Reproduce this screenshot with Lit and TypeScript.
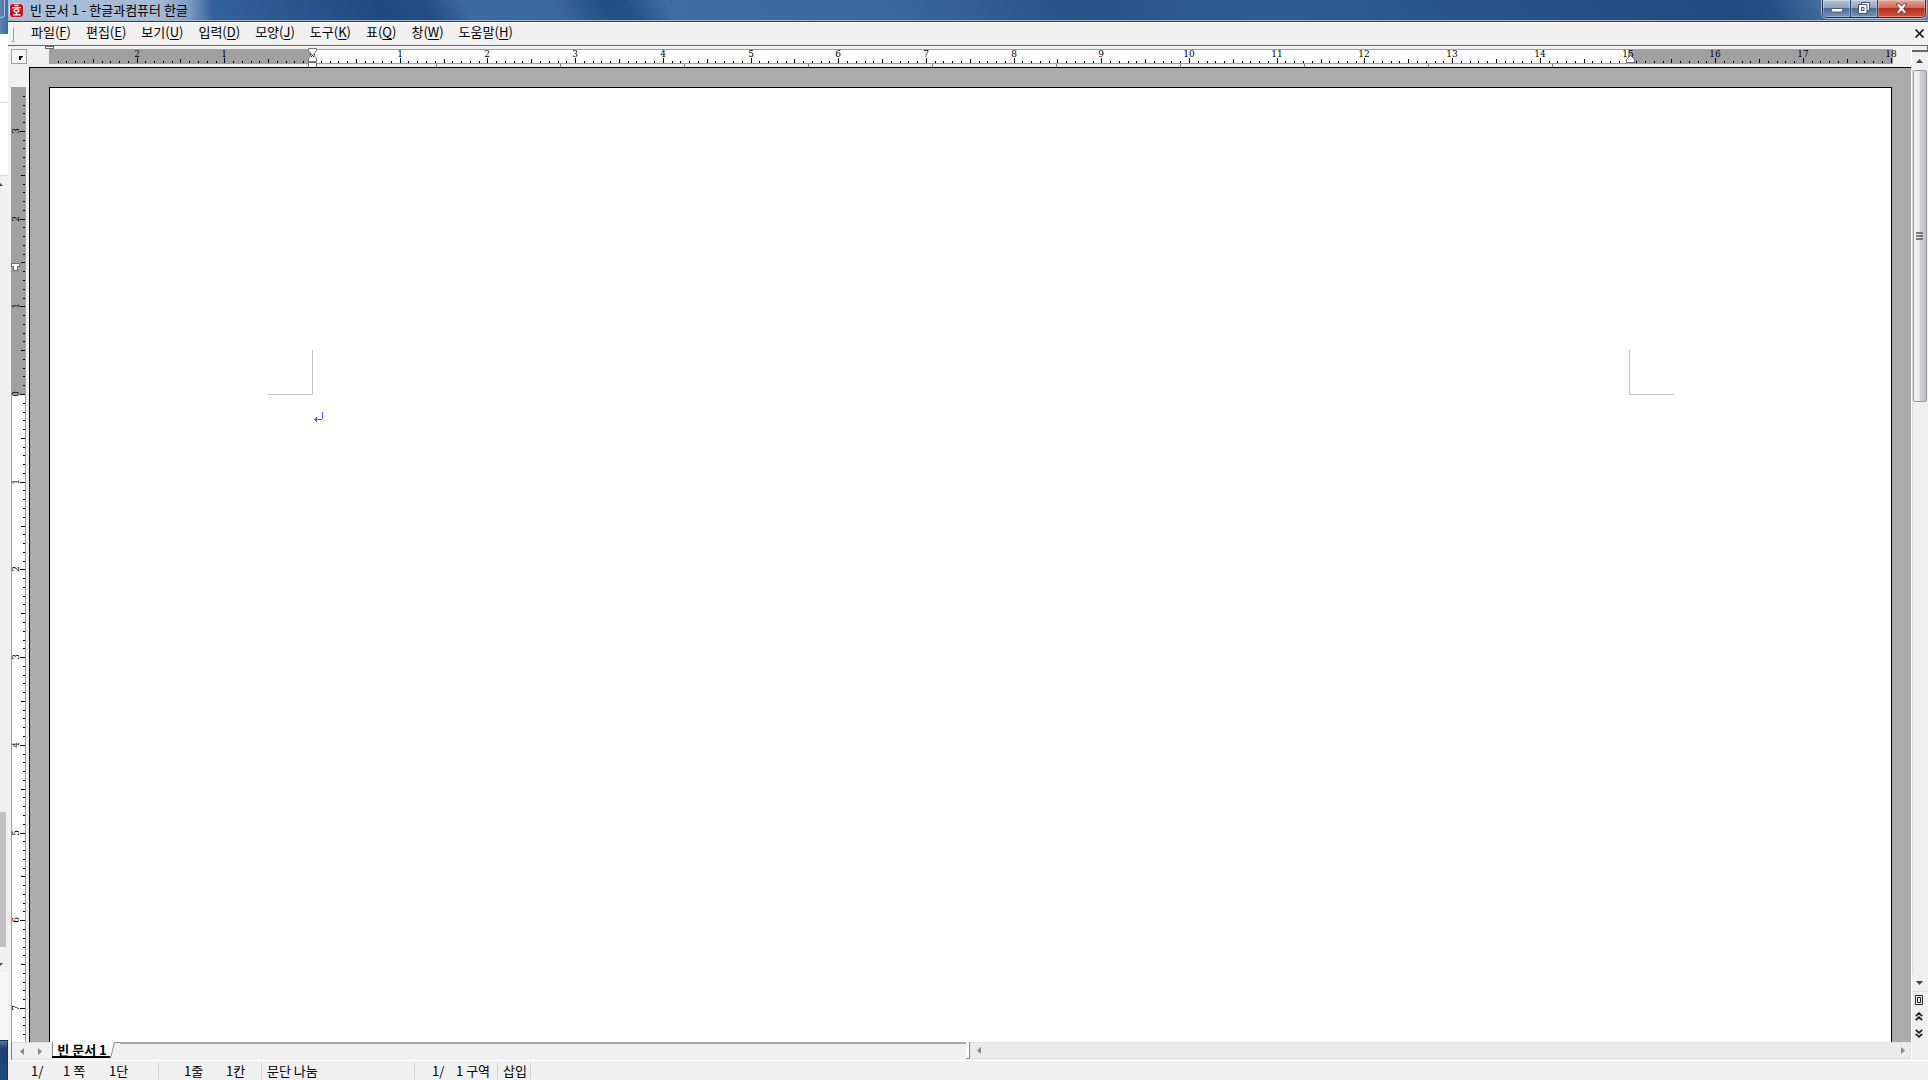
import { LitElement, html, svg, css } from "lit";
import { customElement, state } from "lit/decorators.js";

const UNIT = 87.7;

const range = (from: number, to: number) =>
  Array.from({ length: Math.max(0, to - from + 1) }, (_, i) => from + i);

const MENUS: [string, string][] = [
  ["파일", "F"],
  ["편집", "E"],
  ["보기", "U"],
  ["입력", "D"],
  ["모양", "J"],
  ["도구", "K"],
  ["표", "Q"],
  ["창", "W"],
  ["도움말", "H"],
];

const tickLength = (i: number) => (i % 10 === 0 ? 5 : i % 5 === 0 ? 4 : 2);

@customElement("h-ruler")
export class HRuler extends LitElement {
  static styles = css`
    :host {
      display: block;
      height: 21px;
      overflow: hidden;
    }
    svg {
      display: block;
      width: 100%;
      height: 21px;
    }
    text {
      font: 9px "DejaVu Serif", serif;
      text-anchor: middle;
      fill: #000;
    }
  `;

  render() {
    const zero = 283;
    const end = Math.round(zero + 15 * UNIT);
    const at = (i: number) => Math.round(zero + (i * UNIT) / 10);
    return html`<svg shape-rendering="crispEdges" aria-hidden="true">
      <rect x="20" y="3" width="1844" height="15" fill="#a0a0a0"></rect>
      <rect x=${zero} y="4" width=${end - zero} height="13" fill="#fff"></rect>
      ${range(-29, 180).map(
        (i) => svg`<rect x=${at(i)} y=${17 - tickLength(i)} width="1" height=${tickLength(i)} fill="#000"></rect>`
      )}
      ${range(-2, 18)
        .filter((n) => n !== 0)
        .map((n) => svg`<text x=${at(n * 10)} y="11">${Math.abs(n)}</text>`)}
      ${range(1, 10).map(
        (k) => svg`<rect x=${zero + k * 124} y="18" width="1" height="3" fill="#808080"></rect>`
      )}
      <rect x="0" y="20" width="100%" height="0" fill="#000"></rect>
      <rect x="16" y="0" width="9" height="3" fill="#666"></rect>
      <rect x="17" y="1" width="7" height="1" fill="#fff"></rect>
      <g shape-rendering="auto" fill="#fff" stroke="#707070">
        <path d="M279.500 2.500h8v2l-3 4l3 4v3h-8v-3l3-4l-3-4z"></path>
        <path d="M279.500 16.500h8v5h-8z"></path>
        <path d="M1597.500 16.500v-3l4-4l4 4v3z"></path>
      </g>
      <path d="M281 8h1v1h-1zM285 8h1v1h-1zM283 9h1v1h-1zM282 10h1v1h-1zM284 10h1v1h-1z" fill="#222"></path>
    </svg>`;
  }
}

@customElement("v-ruler")
export class VRuler extends LitElement {
  static styles = css`
    :host {
      display: block;
      overflow: hidden;
      min-height: 0;
    }
    svg {
      display: block;
      width: 15px;
      height: 100%;
    }
    text {
      font: 9px "DejaVu Serif", serif;
      text-anchor: middle;
      fill: #000;
    }
  `;

  @state() private length = 955;

  private observer = new ResizeObserver(([entry]) => {
    this.length = entry.contentRect.height;
  });

  connectedCallback() {
    super.connectedCallback();
    this.observer.observe(this);
  }

  disconnectedCallback() {
    this.observer.disconnect();
    super.disconnectedCallback();
  }

  render() {
    const zero = 307;
    const at = (i: number) => Math.round(zero + (i * UNIT) / 10);
    const lastTick = Math.floor(((this.length - zero) / UNIT) * 10);
    const lastNumber = Math.floor((this.length - zero - 4) / UNIT);
    return html`<svg shape-rendering="crispEdges" aria-hidden="true">
      <rect x="0" y="0" width="15" height="100%" fill="#a0a0a0"></rect>
      <rect x="1" y=${zero + 1} width="13" height="100%" fill="#fff"></rect>
      ${range(-34, lastTick).map(
        (i) => svg`<rect x=${14 - tickLength(i)} y=${at(i)} width=${tickLength(i)} height="1" fill="#000"></rect>`
      )}
      ${range(-3, lastNumber).map(
        (n) => svg`<text transform="translate(8 ${at(n * 10)}) rotate(-90)">${Math.abs(n)}</text>`
      )}
      <path d="M0.500 176.500h8v3h-2v4h-4v-4h-2z" fill="#fff" stroke="#707070"></path>
    </svg>`;
  }
}

@customElement("app-root")
export class AppRoot extends LitElement {
  static styles = css`
    :host {
      display: flex;
      height: 100vh;
      overflow: hidden;
      background: #f0f0f0;
      color: #000;
      font: 13px/18px "Noto Sans CJK KR", sans-serif;
    }
    * {
      box-sizing: border-box;
    }
    button {
      margin: 0;
      padding: 0;
      border: 0;
      background: none;
      color: inherit;
      font: inherit;
      display: flex;
      align-items: center;
      justify-content: center;
    }
    svg {
      display: block;
      flex: none;
    }

    .behind {
      flex: none;
      width: 8px;
      display: flex;
      flex-direction: column;
      background: #f0f0f0;
    }
    .behind-title {
      height: 34px;
      background: linear-gradient(90deg, #5c83b3, #3f6ca6);
      padding-right: 3px;
    }
    .behind-title i {
      display: block;
      height: 18px;
      border: solid #a9bfd9;
      border-width: 0 1px 1px 0;
      border-radius: 0 0 4px 0;
    }
    .behind-page {
      background: #fff;
      height: 69px;
      border-bottom: 1px solid #d8d8d8;
    }
    .behind-page + .behind-page {
      height: 73px;
    }
    .behind-scroll {
      flex: 1;
      display: flex;
      flex-direction: column;
      padding-top: 7px;
    }
    .behind-track {
      flex: 1;
      display: flex;
      flex-direction: column;
      justify-content: flex-end;
      padding: 0 2px 16px 0;
    }
    .behind-thumb {
      height: 135px;
      background: #c1c1c1;
    }
    .behind-foot {
      height: 68px;
      margin-top: 6px;
      background: #f6f6f6;
    }
    .behind-bar {
      height: 40px;
      border: solid #14335c;
      border-width: 1px 1px 0 0;
      background: linear-gradient(#5377a3, #1d4170 20%, #1f4b80);
    }

    .window {
      flex: 1;
      min-width: 0;
      display: flex;
      flex-direction: column;
    }
    .title {
      flex: none;
      height: 22px;
      display: flex;
      align-items: flex-start;
      border-bottom: 1px solid #263e60;
      box-shadow: inset 0 -1px #a7bcd8;
      background:
        linear-gradient(90deg, rgba(205, 217, 234, 0.75), rgba(205, 217, 234, 0.75) 150px, rgba(205, 217, 234, 0.5) 180px, rgba(205, 217, 234, 0) 205px),
        linear-gradient(60deg, #3e6ca4 0, #32609b 190px, #1f4a7f 330px, #234e85 370px, #3c6aa2 405px, #3a68a0 480px, #215083 525px, #235287 545px, #3e6da4 580px, #3a68a1 760px, #265489 930px, #2e5d96 1100px, #25528a 1300px, #214b7f 1500px, #254f84 1535px, #5c80ae 1610px);
    }
    .title h1 {
      flex: 1;
      margin: 0;
      display: flex;
      align-items: center;
      gap: 6px;
      padding: 1px 0 0 1px;
      font-size: 13px;
      line-height: 18px;
      font-weight: 400;
    }
    .caption {
      display: flex;
      height: 18px;
      margin-right: 2px;
      border: 1px solid #1d2f4b;
      border-top: 0;
      border-radius: 0 0 5px 5px;
      overflow: hidden;
      box-shadow: 0 0 0 1px rgba(210, 224, 242, 0.7);
    }
    .caption button {
      width: 28px;
      padding-bottom: 1px;
      border-right: 1px solid #253b5c;
      background: linear-gradient(#b7c6da, #8ca3c0 45%, #4c6c95 50%, #7894b8);
      box-shadow: inset 0 0 0 1px rgba(255, 255, 255, 0.3);
    }
    .caption .minimize {
      padding-top: 3px;
    }
    .caption .restore {
      width: 27px;
    }
    .caption .close {
      width: 47px;
      border-right: 0;
      background: linear-gradient(#e3a698, #cf6a57 45%, #b92c17 50%, #cf5a3e);
    }

    .menubar {
      flex: none;
      height: 24px;
      display: flex;
      align-items: center;
      border-top: 1px solid #fff;
      border-bottom: 1px solid #696969;
      padding-left: 3px;
      background: #f0f0f0;
    }
    .grip {
      width: 3px;
      height: 15px;
      border: 1px solid #fff;
      border-right-color: #a0a0a0;
      border-bottom-color: #a0a0a0;
      margin-right: 17px;
    }
    .menus {
      flex: 1;
      display: flex;
      gap: 15px;
      padding-bottom: 4px;
    }
    .menus button {
      height: 18px;
    }
    .menus u {
      text-underline-offset: 2px;
    }
    .doc-close {
      width: 17px;
      height: 20px;
      padding-bottom: 2px;
    }

    .body {
      flex: 1;
      min-height: 0;
      display: grid;
      grid-template-columns: 21px minmax(0, 1fr) 17px;
      grid-template-rows: 21px minmax(0, 1fr) 18px;
    }
    .corner {
      padding: 3px 2px 3px 3px;
    }
    .corner button {
      width: 16px;
      height: 15px;
      border: 1px solid #a0a0a0;
      background: #f6f6f6;
      padding: 2px 0 0 3px;
    }
    .vcell {
      display: grid;
      grid-template-rows: minmax(0, 1fr);
      padding: 20px 3px 0;
    }
    .canvas {
      border: 1px solid #000;
      border-right: 0;
      border-bottom: 0;
      background: #ababab;
      padding: 19px 19px 0;
      display: flex;
    }
    .page {
      flex: 1;
      border: 1px solid #000;
      border-bottom: 0;
      background: #fff;
      padding: 262px 217px 0 218px;
    }
    .marks {
      display: flex;
      justify-content: space-between;
    }
    .mark {
      width: 45px;
      height: 45px;
      border: solid #c4c4c4;
      border-width: 0 1px 1px 0;
    }
    .mark.right {
      border-width: 0 0 1px 1px;
    }
    .line {
      padding: 17px 0 0 46px;
    }

    .vscroll {
      grid-column: 3;
      grid-row: 1 / span 3;
      display: flex;
      flex-direction: column;
      border-left: 1px solid #fff;
      background: #efefef;
    }
    .split {
      flex: none;
      height: 6px;
      border: solid #696969;
      border-width: 0 1px 2px 0;
    }
    .arrow {
      flex: none;
      width: 15px;
      height: 17px;
    }
    .track {
      flex: 1;
      display: flex;
      border-left: 1px solid #dedede;
      padding-top: 1px;
    }
    .thumb {
      width: 14px;
      height: 332px;
      padding-right: 2px;
      border: 1px solid #979797;
      border-radius: 2px;
      background: linear-gradient(90deg, #f5f5f5, #e6e6e8 45%, #cfcfd3 55%, #c0c0c8);
    }
    .nav {
      flex: none;
      display: flex;
      flex-direction: column;
      align-items: center;
      height: 69px;
      padding-right: 2px;
      border-top: 1px solid #dcdcdc;
    }
    .nav button {
      width: 14px;
      height: 17px;
      padding-bottom: 2px;
    }

    .tabs {
      grid-column: 1 / span 2;
      display: flex;
      background: #f0f0f0;
    }
    .tab-nav {
      display: flex;
      width: 38px;
      margin-left: 4px;
      border: solid #e0e0e0;
      border-width: 1px 0 1px 0;
      box-shadow: -1px 0 #808080;
      padding-left: 1px;
    }
    .tab-nav button {
      width: 18px;
    }
    .tab {
      width: 68px;
      margin-left: 2px;
      position: relative;
      font-weight: 700;
      padding: 0 8px 2px 0;
    }
    .tab svg {
      position: absolute;
      inset: 0;
    }
    .tab span {
      position: relative;
    }
    .tab-rest {
      flex: 849;
      border-top: 2px solid #a8a8a8;
    }
    .splitter {
      width: 4px;
      height: 17px;
      border: solid #8a8a8a;
      border-width: 0 1px 1px 0;
      background: #fff;
    }
    .hscroll {
      flex: 942;
      display: flex;
      justify-content: space-between;
      border: 1px solid #e2e2e2;
      background: #ebebeb;
      margin-bottom: 1px;
    }
    .hscroll button {
      width: 15px;
    }

    .status {
      flex: none;
      height: 20px;
      display: flex;
      align-items: center;
      border-top: 1px solid #fff;
      white-space: pre;
    }
    .status div {
      height: 16px;
      line-height: 16px;
      display: flex;
      border-right: 1px solid #d0d0d0;
    }
    .cell-page {
      width: 151px;
      padding-left: 23px;
    }
    .cell-page span:nth-child(1) {
      width: 32px;
    }
    .cell-page span:nth-child(2) {
      width: 46px;
    }
    .cell-line {
      width: 103px;
      padding-left: 25px;
    }
    .cell-line span:nth-child(1) {
      width: 42px;
    }
    .cell-name {
      width: 153px;
      padding-left: 5px;
    }
    .cell-section {
      width: 83px;
      padding-left: 17px;
    }
    .cell-section span:nth-child(1) {
      width: 24px;
    }
    .cell-mode {
      width: 33px;
      padding-left: 5px;
    }
  `;

  private triangle(path: string, w: number, h: number, fill: string) {
    return html`<svg width=${w} height=${h} viewBox="0 0 ${w} ${h}" aria-hidden="true">
      <path d=${path} fill=${fill}></path>
    </svg>`;
  }

  render() {
    return html`
      <div class="behind" aria-hidden="true">
        <div class="behind-title"><i></i></div>
        <div class="behind-page"></div>
        <div class="behind-page"></div>
        <div class="behind-scroll">
          ${this.triangle("M0 0L3 3H0z", 3, 3, "#444")}
          <div class="behind-track"><div class="behind-thumb"></div></div>
          ${this.triangle("M0 0H3L0 3z", 3, 3, "#444")}
          <div class="behind-foot"></div>
          <div class="behind-bar"></div>
        </div>
      </div>

      <div class="window">
        <header class="title">
          <h1>
            <svg width="15" height="16" viewBox="0 0 15 16" aria-hidden="true">
              <rect x="0.500" y="1.500" width="14" height="14" rx="3" fill="#c4161c" stroke="#f0dada"></rect>
              <g stroke="#fff" fill="none" stroke-width="1.300">
                <path d="M5.500 3.500H9.500M3 5.700H12"></path>
                <ellipse cx="7.500" cy="8.600" rx="2.400" ry="1.600"></ellipse>
                <path d="M7.500 10.200V13M4 12.800H11.500"></path>
              </g>
            </svg>
            빈 문서 1 - 한글과컴퓨터 한글
          </h1>
          <div class="caption">
            <button class="minimize" aria-label="최소화">
              <svg width="14" height="6" viewBox="0 0 14 6"><rect x="1.500" y="1.500" width="11" height="3.500" rx="1" fill="#fff" stroke="#4c5a70"></rect></svg>
            </button>
            <button class="restore" aria-label="이전 크기로">
              <svg width="12" height="12" viewBox="0 0 12 12" fill="#fff" stroke="#47546a">
                <path d="M3.500 0.500h8v8h-8z"></path>
                <path fill-rule="evenodd" d="M0.500 2.500h8.500v9h-8.500zM3.500 5.500v3h2.500v-3z"></path>
              </svg>
            </button>
            <button class="close" aria-label="닫기">
              <svg width="13" height="11" viewBox="0 0 13 11"><path d="M1 0.800H4.300L6.500 3.200L8.700 0.800H12L8.600 5.500L12 10.200H8.700L6.500 7.800L4.300 10.200H1L4.400 5.500z" fill="#fff" stroke="#5a4a55"></path></svg>
            </button>
          </div>
        </header>

        <nav class="menubar">
          <span class="grip"></span>
          <div class="menus">
            ${MENUS.map(([name, key]) => html`<button><span>${name}(<u>${key}</u>)</span></button>`)}
          </div>
          <button class="doc-close" aria-label="문서 닫기">
            <svg width="9" height="9" viewBox="0 0 9 9"><path d="M0.500 0.500L8.500 8.500M8.500 0.500L0.500 8.500" stroke="#000" stroke-width="1.500"></path></svg>
          </button>
        </nav>

        <main class="body">
          <div class="corner">
            <button aria-label="탭 종류">${this.triangle("M0 0H4V1H3V2H2V4H0z", 4, 4, "#000")}</button>
          </div>
          <h-ruler></h-ruler>
          <div class="vcell"><v-ruler></v-ruler></div>
          <div class="canvas">
            <article class="page">
              <div class="marks"><div class="mark"></div><div class="mark right"></div></div>
              <div class="line">
                <svg width="9" height="10" viewBox="0 0 9 10" shape-rendering="crispEdges" aria-hidden="true">
                  <path d="M8 0h1v7h-1zM0 7h8v1H0zM1 6h2v3H1zM2 5h1v5H2z" fill="#4169e1"></path>
                </svg>
              </div>
            </article>
          </div>
          <div class="vscroll">
            <div class="split"></div>
            <button class="arrow" aria-label="위로">${this.triangle("M3.500 0L7 4H0z", 7, 4, "#444")}</button>
            <div class="track">
              <button class="thumb" aria-label="스크롤 위치">
                <svg width="7" height="9" viewBox="0 0 7 9"><path d="M0 1h7M0 4h7M0 7h7" stroke="#55555c" stroke-width="1.500"></path></svg>
              </button>
            </div>
            <button class="arrow" aria-label="아래로">${this.triangle("M0 0H7L3.500 4z", 7, 4, "#444")}</button>
            <div class="nav">
              <button aria-label="찾아갈 개체">
                <svg width="8" height="10" viewBox="0 0 8 10" fill="none" stroke="#222"><path d="M0.500 0.500h7v9h-7zM2.500 2.500h3v5h-3z"></path></svg>
              </button>
              <button aria-label="이전">
                <svg width="8" height="9" viewBox="0 0 8 9" fill="none" stroke="#222" stroke-width="1.800"><path d="M0.800 4.200L4 1.200L7.200 4.200M0.800 8.200L4 5.200L7.200 8.200"></path></svg>
              </button>
              <button aria-label="다음">
                <svg width="8" height="9" viewBox="0 0 8 9" fill="none" stroke="#222" stroke-width="1.800"><path d="M0.800 0.800L4 3.800L7.200 0.800M0.800 4.800L4 7.800L7.200 4.800"></path></svg>
              </button>
            </div>
          </div>
          <div class="tabs">
            <div class="tab-nav">
              <button aria-label="이전 탭">${this.triangle("M4 0V7L0 3.500z", 4, 7, "#888")}</button>
              <button aria-label="다음 탭">${this.triangle("M0 0V7L4 3.500z", 4, 7, "#888")}</button>
            </div>
            <button class="tab">
              <svg width="68" height="18" viewBox="0 0 68 18" aria-hidden="true">
                <path d="M0 0H68V1H62L59 15H0z" fill="#fff"></path>
                <path d="M0.500 0V15M68 0.500H62.500L58.500 16" fill="none" stroke="#8a8a8a"></path>
                <path d="M0 14H58V16H0z" fill="#000"></path>
              </svg>
              <span>빈 문서 1</span>
            </button>
            <div class="tab-rest"></div>
            <div class="splitter"></div>
            <div class="hscroll">
              <button aria-label="왼쪽으로">${this.triangle("M4 0V7L0 3.500z", 4, 7, "#888")}</button>
              <button aria-label="오른쪽으로">${this.triangle("M0 0V7L4 3.500z", 4, 7, "#888")}</button>
            </div>
          </div>
        </main>

        <footer class="status">
          <div class="cell-page"><span>1/</span><span>1 쪽</span><span>1단</span></div>
          <div class="cell-line"><span>1줄</span><span>1칸</span></div>
          <div class="cell-name">문단 나눔</div>
          <div class="cell-section"><span>1/</span><span>1 구역</span></div>
          <div class="cell-mode">삽입</div>
        </footer>
      </div>
    `;
  }
}
